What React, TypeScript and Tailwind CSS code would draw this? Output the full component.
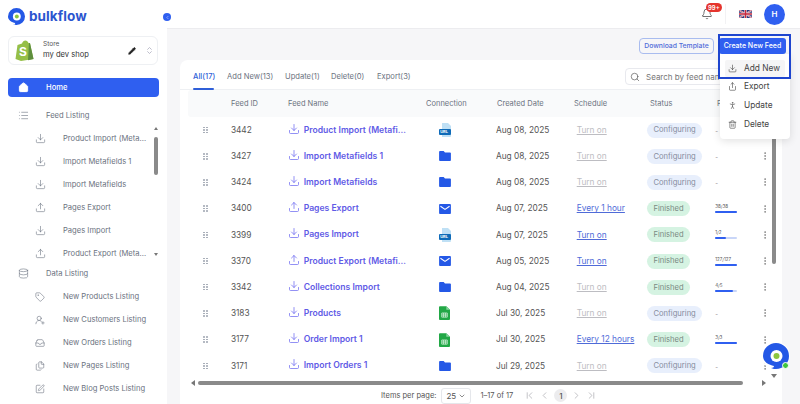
import {
  Bell,
  ChevronDown,
  ChevronFirst,
  ChevronLast,
  ChevronLeft,
  ChevronRight,
  ChevronsUpDown,
  Database,
  Download,
  EllipsisVertical,
  Files,
  Home,
  Inbox,
  List,
  Pencil,
  PersonStanding,
  Search,
  Share,
  SquarePen,
  Tag,
  Trash2,
  Upload,
  UserRoundPlus,
} from "lucide-react";

type Conn = "url" | "folder" | "mail" | "sheet";
type Row = {
  id: number;
  name: string;
  icon: "in" | "out";
  conn: Conn;
  date: string;
  schedule: string;
  on: boolean;
  status: "Configuring" | "Finished";
  progress?: string;
  pct?: number;
};

const rows: Row[] = [
  { id: 3442, name: "Product Import (Metafi...", icon: "in", conn: "url", date: "Aug 08, 2025", schedule: "Turn on", on: false, status: "Configuring" },
  { id: 3427, name: "Import Metafields 1", icon: "in", conn: "folder", date: "Aug 08, 2025", schedule: "Turn on", on: false, status: "Configuring" },
  { id: 3424, name: "Import Metafields", icon: "in", conn: "folder", date: "Aug 08, 2025", schedule: "Turn on", on: false, status: "Configuring" },
  { id: 3400, name: "Pages Export", icon: "out", conn: "mail", date: "Aug 07, 2025", schedule: "Every 1 hour", on: true, status: "Finished", progress: "38/38", pct: 100 },
  { id: 3399, name: "Pages Import", icon: "in", conn: "url", date: "Aug 07, 2025", schedule: "Turn on", on: true, status: "Finished", progress: "1/2", pct: 50 },
  { id: 3370, name: "Product Export (Metafi...", icon: "out", conn: "mail", date: "Aug 05, 2025", schedule: "Turn on", on: true, status: "Finished", progress: "127/127", pct: 100 },
  { id: 3342, name: "Collections Import", icon: "in", conn: "folder", date: "Aug 04, 2025", schedule: "Turn on", on: false, status: "Finished", progress: "4/5", pct: 80 },
  { id: 3183, name: "Products", icon: "in", conn: "sheet", date: "Jul 30, 2025", schedule: "Turn on", on: false, status: "Configuring" },
  { id: 3177, name: "Order Import 1", icon: "in", conn: "sheet", date: "Jul 30, 2025", schedule: "Every 12 hours", on: true, status: "Finished", progress: "3/3", pct: 100 },
  { id: 3171, name: "Import Orders 1", icon: "in", conn: "folder", date: "Jul 29, 2025", schedule: "Turn on", on: false, status: "Configuring" },
];

const feedLinks = [
  { label: "Product Import (Meta...", Icon: Download },
  { label: "Import Metafields 1", Icon: Download },
  { label: "Import Metafields", Icon: Download },
  { label: "Pages Export", Icon: Upload },
  { label: "Pages Import", Icon: Download },
  { label: "Product Export (Meta...", Icon: Upload },
];

const dataLinks = [
  { label: "New Products Listing", Icon: Tag },
  { label: "New Customers Listing", Icon: UserRoundPlus },
  { label: "New Orders Listing", Icon: Inbox },
  { label: "New Pages Listing", Icon: Files },
  { label: "New Blog Posts Listing", Icon: SquarePen },
];

function Logo({ size }: { size: number }) {
  return (
    <svg width={size} height={size} viewBox="0 0 26 26">
      <path d="M13 0a13 13 0 1 1 0 26c-1 0-3 0-5-1 2 0 3-1 3-2-5-1-11-4-11-10A13 13 0 0 1 13 0z" fill="#2458e6" />
      <circle cx="13.5" cy="13" r="6" fill="#fff" />
      <circle cx="13.5" cy="13" r="3" fill="#8cc63f" />
    </svg>
  );
}

function ShopifyBag() {
  return (
    <div className="relative h-[21px] w-[19px] shrink-0">
      <svg width="19" height="21" viewBox="0 0 19 21">
        <path d="M2.5 5 7 3.6C7.5 1.6 9 .4 10.5.4c1.2 0 2.5 1 3 2.6l1.5.2L18.5 19 6 21 .5 19z" fill="#95bf47" />
        <path d="M15 3.2 18.5 19 13 20.2 14 3z" fill="#5e8e3e" />
      </svg>
      <span className="absolute top-[4px] left-[4px] font-[Inter,sans-serif] text-[12px] leading-[15px] font-bold text-white">S</span>
    </div>
  );
}

function UkFlag() {
  return (
    <svg width="13" height="8" viewBox="0 0 26 16">
      <rect width="26" height="16" fill="#2a3a7c" />
      <path d="M0 0 26 16M26 0 0 16" stroke="#e8e8f0" strokeWidth="3" />
      <path d="M0 0 26 16M26 0 0 16" stroke="#c8283c" strokeWidth="1.2" />
      <path d="M13 0v16M0 8h26" stroke="#e8e8f0" strokeWidth="5" />
      <path d="M13 0v16M0 8h26" stroke="#c8283c" strokeWidth="3" />
    </svg>
  );
}

function ConnIcon({ kind }: { kind: Conn }) {
  if (kind === "folder") {
    return (
      <svg width="12" height="10" viewBox="0 0 13 11">
        <path d="M1 0h4l1.5 1.6H12a1 1 0 0 1 1 1V10a1 1 0 0 1-1 1H1a1 1 0 0 1-1-1V1a1 1 0 0 1 1-1z" fill="#2458e6" />
      </svg>
    );
  }
  if (kind === "mail") {
    return (
      <svg width="12" height="10" viewBox="0 0 13 11">
        <rect width="13" height="11" rx="1" fill="#2458e6" />
        <path d="M1.5 2.5 6.5 6l5-3.5" fill="none" stroke="#fff" strokeWidth="1.2" />
      </svg>
    );
  }
  if (kind === "sheet") {
    return (
      <svg width="11" height="14" viewBox="0 0 12 15">
        <path d="M1 0h7l4 4v10a1 1 0 0 1-1 1H1a1 1 0 0 1-1-1V1a1 1 0 0 1 1-1z" fill="#22a846" />
        <path d="M8 0l4 4H8z" fill="#8ad6a0" />
        <path d="M3 7.5h6v4.5H3zM5 7.5V12M7 7.5V12M3 9.7h6" fill="none" stroke="#dff5e5" strokeWidth=".8" />
      </svg>
    );
  }
  return (
    <div className="relative h-[14px] w-[13px]">
      <svg width="13" height="14" viewBox="0 0 13 14">
        <path d="M3 0h6l3 3v10a1 1 0 0 1-1 1H3z" fill="#bfe0f5" />
        <rect y="6" width="12" height="6" rx="1" fill="#0f6bb8" />
      </svg>
      <span className="absolute top-[6px] left-[1px] text-[4px] leading-[6px] font-bold text-white">URL</span>
    </div>
  );
}

function Sidebar() {
  return (
    <aside className="flex h-full w-[167px] shrink-0 flex-col bg-white pt-[8px] pl-[8px]">
      <div className="flex h-[17px] items-center gap-[4px]">
        <Logo size={17} />
        <span className="text-[13.5px] leading-none font-bold tracking-[0.1px] text-[#2b55cf]">bulkflow</span>
      </div>
      <div className="mt-[11px] flex h-[29px] w-[150px] items-center rounded-[6px] border border-[#eef0f3] pl-[6px]">
        <ShopifyBag />
        <div className="ml-[9px] flex-1">
          <div className="text-[6.5px] leading-[9px] text-[#555]">Store</div>
          <div className="text-[7.6px] leading-[12px] text-[#333]">my dev shop</div>
        </div>
        <Pencil className="h-[8px] w-[8px] fill-[#222] text-[#222]" />
        <ChevronsUpDown className="mr-[3px] ml-[9px] h-[9px] w-[9px] text-[#aab]" />
      </div>
      <div className="mt-[13px] flex h-[19px] w-[151px] items-center rounded-[4px] bg-[#2f5ff0] pl-[10px] text-white">
        <Home className="h-[11px] w-[11px] fill-white" />
        <span className="ml-[17px] text-[7.6px] font-medium">Home</span>
      </div>
      <div className="mt-[9px] flex h-[19px] items-center pl-[10px] text-[#6b7280]">
        <List className="h-[11px] w-[11px]" strokeWidth={1.3} />
        <span className="ml-[17px] text-[7.6px]">Feed Listing</span>
      </div>
      <div className="mt-[2px] flex h-[136px] w-[151px]">
        <div className="flex-1">
          {feedLinks.map(({ label, Icon }) => (
            <div key={label} className="flex h-[23px] items-center pl-[27px] text-[#6b7280]">
              <Icon className="h-[11px] w-[11px]" strokeWidth={1.3} />
              <span className="ml-[17px] text-[7.6px] whitespace-nowrap">{label}</span>
            </div>
          ))}
        </div>
        <div className="flex w-[6px] flex-col items-center">
          <div className="h-0 w-0 border-x-[2.5px] border-b-[3px] border-x-transparent border-b-[#777]" />
          <div className="mt-[7px] h-[38px] w-[4px] rounded-full bg-[#8a8a8a]" />
          <div className="mt-[78px] h-0 w-0 border-x-[2.5px] border-t-[3px] border-x-transparent border-t-[#777]" />
        </div>
      </div>
      <div className="mt-[1px] flex h-[19px] items-center pl-[10px] text-[#6b7280]">
        <Database className="h-[11px] w-[11px]" strokeWidth={1.3} />
        <span className="ml-[17px] text-[7.6px]">Data Listing</span>
      </div>
      <div className="mt-[2px]">
        {dataLinks.map(({ label, Icon }) => (
          <div key={label} className="flex h-[23px] items-center pl-[27px] text-[#6b7280]">
            <Icon className="h-[10px] w-[10px]" strokeWidth={1.4} />
            <span className="ml-[18px] text-[7.6px] whitespace-nowrap">{label}</span>
          </div>
        ))}
      </div>
    </aside>
  );
}

function TopBar() {
  return (
    <header className="flex h-[29px] shrink-0 items-center justify-end border-b border-[#ececef] bg-white pr-[15px]">
      <div className="relative mr-[12px]">
        <Bell className="h-[12px] w-[12px] text-[#444]" strokeWidth={1.5} />
        <span className="absolute -top-[5px] left-[5px] rounded-full bg-[#e5342d] px-[2px] text-[6px] leading-[9px] font-semibold text-white">99+</span>
      </div>
      <div className="mr-[12px] flex h-[20px] items-center border-l border-[#f2f2f4] pl-[13px]">
        <UkFlag />
      </div>
      <div className="flex h-[21px] w-[21px] items-center justify-center rounded-full bg-[#2f5ff0] text-[8px] font-semibold text-white">H</div>
    </header>
  );
}

function Tabs() {
  const tabs = [
    { label: "All(17)", w: "w-[34px]" },
    { label: "Add New(13)", w: "w-[58px]" },
    { label: "Update(1)", w: "w-[46px]" },
    { label: "Delete(0)", w: "w-[46px]" },
    { label: "Export(3)", w: "w-[46px]" },
  ];
  return (
    <div className="flex h-[30px] shrink-0 items-start border-b border-[#eef0f3] pl-[13px]">
      {tabs.map((t, i) => (
        <div key={t.label} className={`${t.w} relative pt-[11px] text-[7.6px] leading-[12px] whitespace-nowrap ${i === 0 ? "font-medium text-[#2f5fd8]" : "text-[#6b7280]"}`}>
          {t.label}
          {i === 0 && <div className="absolute top-[28px] left-0 h-[2px] w-[21px] rounded-full bg-[#2f5fd8]" />}
        </div>
      ))}
      <div className="mt-[8px] ml-auto flex h-[17px] w-[157px] shrink-0 items-center rounded-[4px] border border-[#e8e9ee] pl-[4px]">
        <Search className="h-[10px] w-[10px] text-[#555]" strokeWidth={1.6} />
        <span className="ml-[6px] text-[8px] text-[#777]">Search by feed name</span>
      </div>
    </div>
  );
}

function TableHead() {
  return (
    <div className="flex h-[27px] items-center rounded-[3px] bg-[#f9fafb] text-[7.5px] text-[#6b7280]">
      <div className="w-[43px]" />
      <div className="w-[57px]">Feed ID</div>
      <div className="w-[138px]">Feed Name</div>
      <div className="w-[71px]">Connection</div>
      <div className="w-[77px]">Created Date</div>
      <div className="w-[76px]">Schedule</div>
      <div className="w-[67px]">Status</div>
      <div>Progress</div>
    </div>
  );
}

function DragDots() {
  return (
    <div className="grid w-[5px] grid-cols-2 gap-[1px]">
      {[0, 1, 2, 3, 4, 5].map((n) => (
        <span key={n} className="h-[1.5px] w-[1.5px] rounded-full bg-[#9ca3af]" />
      ))}
    </div>
  );
}

function TableRow({ row }: { row: Row }) {
  const FeedIcon = row.icon === "in" ? Download : Upload;
  return (
    <div className="flex h-[26.2px] items-center text-[8.3px] text-[#555]">
      <div className="flex w-[43px] justify-center pr-[7px]">
        <DragDots />
      </div>
      <div className="w-[57px]">{row.id}</div>
      <div className="flex w-[138px] items-center">
        <FeedIcon className="-mt-[3px] h-[12px] w-[12px] text-[#6f6cf0]" strokeWidth={1.5} />
        <span className="ml-[4px] text-[8.6px] font-semibold whitespace-nowrap text-[#5f5be6]">{row.name}</span>
      </div>
      <div className="flex w-[71px] pl-[14px]">
        <ConnIcon kind={row.conn} />
      </div>
      <div className="w-[77px]">{row.date}</div>
      <div className={`w-[76px] pl-[4px] underline ${row.on ? "text-[#4f6bd8]" : "text-[#bdbdc2]"}`}>{row.schedule}</div>
      <div className="w-[67px]">
        <span className={`-ml-[1px] inline-flex h-[15px] items-center rounded-full px-[6px] text-[7.6px] ${row.status === "Finished" ? "bg-[#d5f3e2] text-[#7a8a82]" : "bg-[#e8effc] text-[#858c9c]"}`}>{row.status}</span>
      </div>
      <div className="w-[45px]">
        {row.progress ? (
          <div className="w-[22px]">
            <div className="text-[4.5px] leading-[6px] text-[#555]">{row.progress}</div>
            <div className="mt-[1px] h-[2px] rounded-full bg-[#c9d6f8]">
              <div className="h-full rounded-full bg-[#2f5ff0]" style={{ width: `${row.pct}%` }} />
            </div>
          </div>
        ) : (
          <span className="text-[6px] text-[#888]">-</span>
        )}
      </div>
      <EllipsisVertical className="h-[10px] w-[10px] text-[#777]" strokeWidth={1.8} />
    </div>
  );
}

function Pager() {
  return (
    <div className="flex h-[17px] shrink-0 items-center pl-[201px] text-[7.5px] text-[#555]">
      <span>Items per page:</span>
      <div className="ml-[5px] flex h-[16px] w-[30px] items-center justify-between rounded-[3px] border border-[#e5e7eb] px-[4px] text-[8px]">
        <span>25</span>
        <ChevronDown className="h-[8px] w-[8px]" />
      </div>
      <span className="ml-[9px]">1–17 of 17</span>
      <div className="ml-[11px] flex items-center gap-[4px] text-[#a8a8ae]">
        <ChevronFirst className="h-[11px] w-[11px]" strokeWidth={1.5} />
        <ChevronLeft className="h-[11px] w-[11px]" strokeWidth={1.5} />
        <span className="flex h-[13px] w-[13px] items-center justify-center rounded-full bg-[#ececee] text-[8px] font-medium text-[#555]">1</span>
        <ChevronRight className="h-[11px] w-[11px]" strokeWidth={1.5} />
        <ChevronLast className="h-[11px] w-[11px]" strokeWidth={1.5} />
      </div>
    </div>
  );
}

function FeedMenu() {
  const items = [
    { label: "Export", Icon: Share },
    { label: "Update", Icon: PersonStanding },
    { label: "Delete", Icon: Trash2 },
  ];
  return (
    <div className="absolute top-[34px] right-[10px] z-10">
      <div className="absolute top-0 left-0 z-20 h-[45px] w-[73px] border-2 border-[#1e45cf]" />
      <div className="ml-[1px] flex h-[20px] w-[68px] items-end">
        <div className="flex h-[16px] w-[67px] items-center justify-center rounded-[3px] bg-[#2f5ff0] text-[7px] font-medium whitespace-nowrap text-white">Create New Feed</div>
      </div>
      <div className="ml-[2px] w-[70px] rounded-b-[4px] bg-white pt-[6px] pb-[5px] shadow-[0_2px_8px_rgba(0,0,0,0.12)]">
        <div className="mx-[5px] flex h-[17px] items-center rounded-[2px] bg-[#f5f5f6] pl-[3px] text-[#444]">
          <Download className="h-[9px] w-[9px]" strokeWidth={1.6} />
          <span className="ml-[7px] text-[8.3px]">Add New</span>
        </div>
        {items.map(({ label, Icon }) => (
          <div key={label} className="mx-[5px] flex h-[19px] items-center pl-[3px] text-[#444]">
            <Icon className="h-[9px] w-[9px]" strokeWidth={1.6} />
            <span className="ml-[7px] text-[8.3px]">{label}</span>
          </div>
        ))}
      </div>
    </div>
  );
}

export default function App() {
  return (
    <div className="relative flex h-[404px] w-[800px] overflow-hidden bg-[#f6f6f8] font-[Inter,sans-serif]">
      <Sidebar />
      <span className="absolute top-[13px] left-[163px] z-10 flex h-[8px] w-[8px] items-center justify-center rounded-full bg-[#2f5ff0]">
        <ChevronLeft className="h-[5px] w-[5px] text-white" />
      </span>
      <main className="relative flex min-w-0 flex-1 flex-col">
        <TopBar />
        <div className="flex h-[31px] shrink-0 items-end justify-end pr-[86px] pb-[6px]">
          <button className="flex h-[16px] w-[75px] items-center justify-center rounded-[4px] border border-[#a9bcef] text-[6.8px] font-medium whitespace-nowrap text-[#4f6bd8]">Download Template</button>
        </div>
        <FeedMenu />
        <section className="mr-[18px] ml-[13px] flex flex-1 flex-col rounded-t-[8px] bg-white">
          <Tabs />
          <div className="flex h-[289px] shrink-0 pl-[8px]">
            <div className="w-[582px] shrink-0 overflow-hidden">
              <TableHead />
              {rows.map((r) => (
                <TableRow key={r.id} row={r} />
              ))}
            </div>
            <div className="flex w-[8px] flex-col items-center">
              <div className="mt-[28px] h-[146px] w-[4px] rounded-full bg-[#8a8a8a]" />
              <div className="mt-[110px] h-0 w-0 border-x-[3px] border-t-[4px] border-x-transparent border-t-[#777]" />
            </div>
          </div>
          <div className="flex h-[8px] shrink-0 items-center pl-[11px]">
            <div className="h-0 w-0 border-y-[3px] border-r-[4px] border-y-transparent border-r-[#777]" />
            <div className="ml-[3px] h-[4px] w-[545px] rounded-full bg-[#8a8a8a]" />
            <div className="ml-[19px] h-0 w-0 border-y-[3px] border-l-[4px] border-y-transparent border-l-[#777]" />
          </div>
          <Pager />
        </section>
      </main>
      <div className="absolute top-[342px] left-[762px] z-20">
        <div className="rounded-full bg-white p-[1px]">
          <Logo size={26} />
        </div>
        <span className="absolute top-[20px] left-[20px] h-[7px] w-[7px] rounded-full border border-white bg-[#3ec43e]" />
      </div>
    </div>
  );
}
